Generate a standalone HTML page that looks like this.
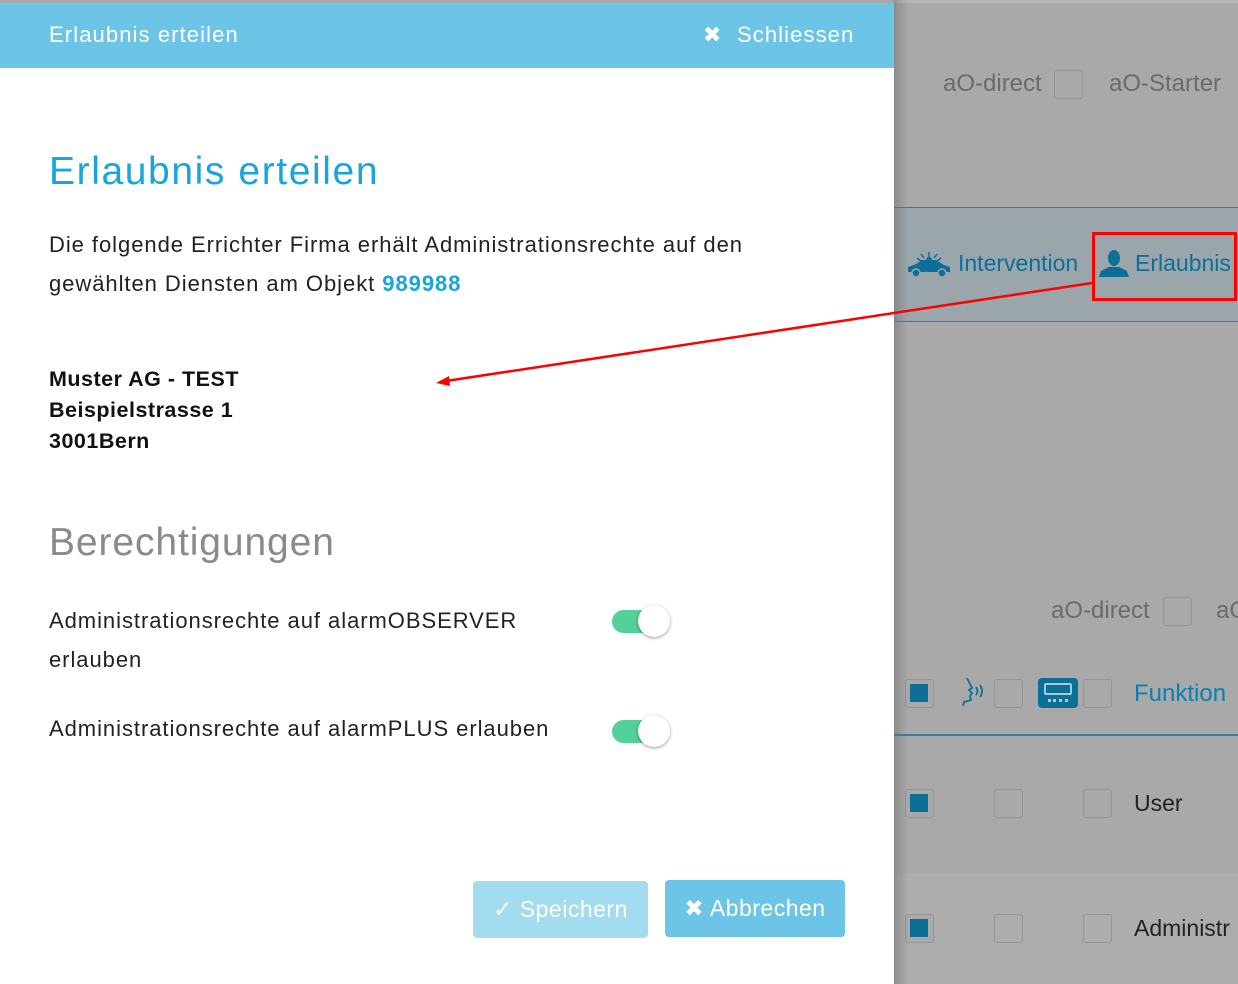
<!DOCTYPE html>
<html><head><meta charset="utf-8"><style>
*{margin:0;padding:0;box-sizing:border-box}
body{width:1238px;height:984px;overflow:hidden;position:relative;background:#a9a9a9;font-family:"Liberation Sans",sans-serif}
.a{position:absolute;white-space:nowrap}
.cb{position:absolute;width:29px;height:29px;border:1.5px solid #959595;border-radius:3px}
.cbf{position:absolute;width:29px;height:29px;border:1.5px solid #959595;border-radius:3px;background:#a9a9a9}
.cbf:after{content:"";position:absolute;left:4px;top:4px;width:18px;height:18px;background:#0b6f96}
.gray{color:#6b6b6b;font-size:24px}
.modal{position:absolute;left:0;top:3px;width:894px;height:981px;background:#fff}
.hdr{position:absolute;left:0;top:0;width:894px;height:65px;background:#6cc5e7;color:#fff;font-size:22px;letter-spacing:1.1px}
.tog{position:absolute;width:58px;height:36px}
.tog .tr{position:absolute;left:0;top:7px;width:50px;height:23px;border-radius:12px;background:#53d19a}
.tog .kn{position:absolute;left:26px;top:2px;width:32px;height:32px;border-radius:50%;background:#fff;box-shadow:0 1px 3px rgba(0,0,0,.4)}
.btn{position:absolute;height:57px;border-radius:4px;color:#fff;font-size:23px;text-align:center;line-height:57px;letter-spacing:0.5px}
.t{font-size:22px;color:#222;letter-spacing:0.95px}
</style></head><body>
<div style="position:absolute;left:894px;top:0;width:344px;height:3px;background:#b8b8b8"></div>
<div class="a gray" style="left:943px;top:70px">aO-direct</div>
<div class="cb" style="left:1054px;top:70px"></div>
<div class="a gray" style="left:1109px;top:70px">aO-Starter</div>
<div style="position:absolute;left:894px;top:207px;width:344px;height:115px;background:#9aa6ab;border-top:1.5px solid #2f7fa2;border-bottom:1.5px solid #2f7fa2"></div>
<svg class="a" style="left:905px;top:250px" width="48" height="28" viewBox="0 0 48 28"><path d="M24 2v5M16 4l3 4M32 4l-3 4M12 8l4 3M36 8l-4 3" stroke="#0b6f96" stroke-width="1.5"/><path d="M3 22v-5l8-3 6-4h14l8 5 6 2v5z" fill="#0b6f96"/><circle cx="24" cy="10" r="3" fill="#0b6f96"/><circle cx="11" cy="23" r="4" fill="#0b6f96" stroke="#9aa6ab" stroke-width="1.5"/><circle cx="37" cy="23" r="4" fill="#0b6f96" stroke="#9aa6ab" stroke-width="1.5"/></svg>
<div class="a" style="left:958px;top:250px;font-size:23px;color:#0b6f96">Intervention</div>
<svg class="a" style="left:1099px;top:249px" width="30" height="28" viewBox="0 0 30 28"><ellipse cx="15" cy="9" rx="6" ry="8" fill="#0b6f96"/><path d="M0 28l2-6 8-4h10l8 4 2 6z" fill="#0b6f96"/></svg>
<div class="a" style="left:1135px;top:250px;font-size:23px;color:#0b6f96">Erlaubnis</div>
<div style="position:absolute;left:1092px;top:232px;width:145px;height:69px;border:3px solid #ff0000"></div>
<div class="a gray" style="left:1051px;top:597px">aO-direct</div>
<div class="cb" style="left:1163px;top:597px"></div>
<div class="a gray" style="left:1216px;top:597px">aO</div>
<div class="cbf" style="left:905px;top:679px"></div>
<svg class="a" style="left:960px;top:676px" width="30" height="32" viewBox="0 0 30 32"><path d="M7 2l5 10-3 2 3 3-2 3 1 4-7 2-1 4" stroke="#0b6f96" stroke-width="1.8" fill="none"/><path d="M16 11q3 4 0 8M20 9q4 6 0 12" stroke="#0b6f96" stroke-width="1.8" fill="none"/></svg>
<div class="cb" style="left:994px;top:679px"></div>
<div style="position:absolute;left:1038px;top:678px;width:40px;height:30px;background:#0b6f96;border-radius:4px"><div style="position:absolute;left:6px;top:5px;width:28px;height:12px;border:2px solid #a9c9d6;border-radius:2px"></div><div style="position:absolute;left:10px;top:21px;width:20px;height:3px;border-top:3px dotted #a9c9d6"></div></div>
<div class="cb" style="left:1083px;top:679px"></div>
<div class="a" style="left:1134px;top:680px;font-size:24px;color:#0b7fb0">Funktion</div>
<div style="position:absolute;left:894px;top:734px;width:344px;height:2px;background:#2f7fa2"></div>
<div class="cbf" style="left:905px;top:789px"></div>
<div class="cb" style="left:994px;top:789px"></div>
<div class="cb" style="left:1083px;top:789px"></div>
<div class="a" style="left:1134px;top:790px;font-size:23px;color:#222">User</div>
<div style="position:absolute;left:894px;top:873px;width:344px;height:111px;background:#adadad"></div>
<div class="cbf" style="left:905px;top:914px"></div>
<div class="cb" style="left:994px;top:914px"></div>
<div class="cb" style="left:1083px;top:914px"></div>
<div class="a" style="left:1134px;top:915px;font-size:23px;color:#222">Administr</div>
<div style="position:absolute;left:894px;top:0;width:14px;height:984px;background:linear-gradient(90deg,rgba(110,110,110,.5),rgba(110,110,110,0))"></div>

<div class="modal">
<div class="hdr"><div class="a" style="left:49px;top:19px">Erlaubnis erteilen</div><div class="a" style="left:703px;top:19px">✖&nbsp; Schliessen</div></div>
<div class="a" style="left:49px;top:147px;font-size:39px;color:#18a5dd;letter-spacing:1.6px">Erlaubnis erteilen</div>
<div class="a t" style="left:49px;top:222px;line-height:39px">Die folgende Errichter Firma erhält Administrationsrechte auf den<br>gewählten Diensten am Objekt <b style="color:#18a5dd">989988</b></div>
<div class="a" style="left:49px;top:361px;font-size:21.5px;color:#111;font-weight:bold;line-height:31px;letter-spacing:0.5px">Muster AG - TEST<br>Beispielstrasse 1<br>3001Bern</div>
<div class="a" style="left:49px;top:518px;font-size:39px;color:#8a8a8a;letter-spacing:0.9px">Berechtigungen</div>
<div class="a t" style="left:49px;top:598px;line-height:39px">Administrationsrechte auf alarmOBSERVER<br>erlauben</div>
<div class="tog" style="left:612px;top:600px"><div class="tr"></div><div class="kn"></div></div>
<div class="a t" style="left:49px;top:713px">Administrationsrechte auf alarmPLUS erlauben</div>
<div class="tog" style="left:612px;top:710px"><div class="tr"></div><div class="kn"></div></div>
<div class="btn" style="left:473px;top:878px;width:175px;background:#a3dbef">✓ Speichern</div>
<div class="btn" style="left:665px;top:877px;width:180px;background:#6cc5e7">✖ Abbrechen</div>
</div>
<svg style="position:absolute;left:0;top:0" width="1238" height="984"><line x1="1092" y1="283" x2="446" y2="381" stroke="#f00" stroke-width="2.5"/><path d="M436 383l13-7 1 10z" fill="#f00"/></svg>
</body></html>
